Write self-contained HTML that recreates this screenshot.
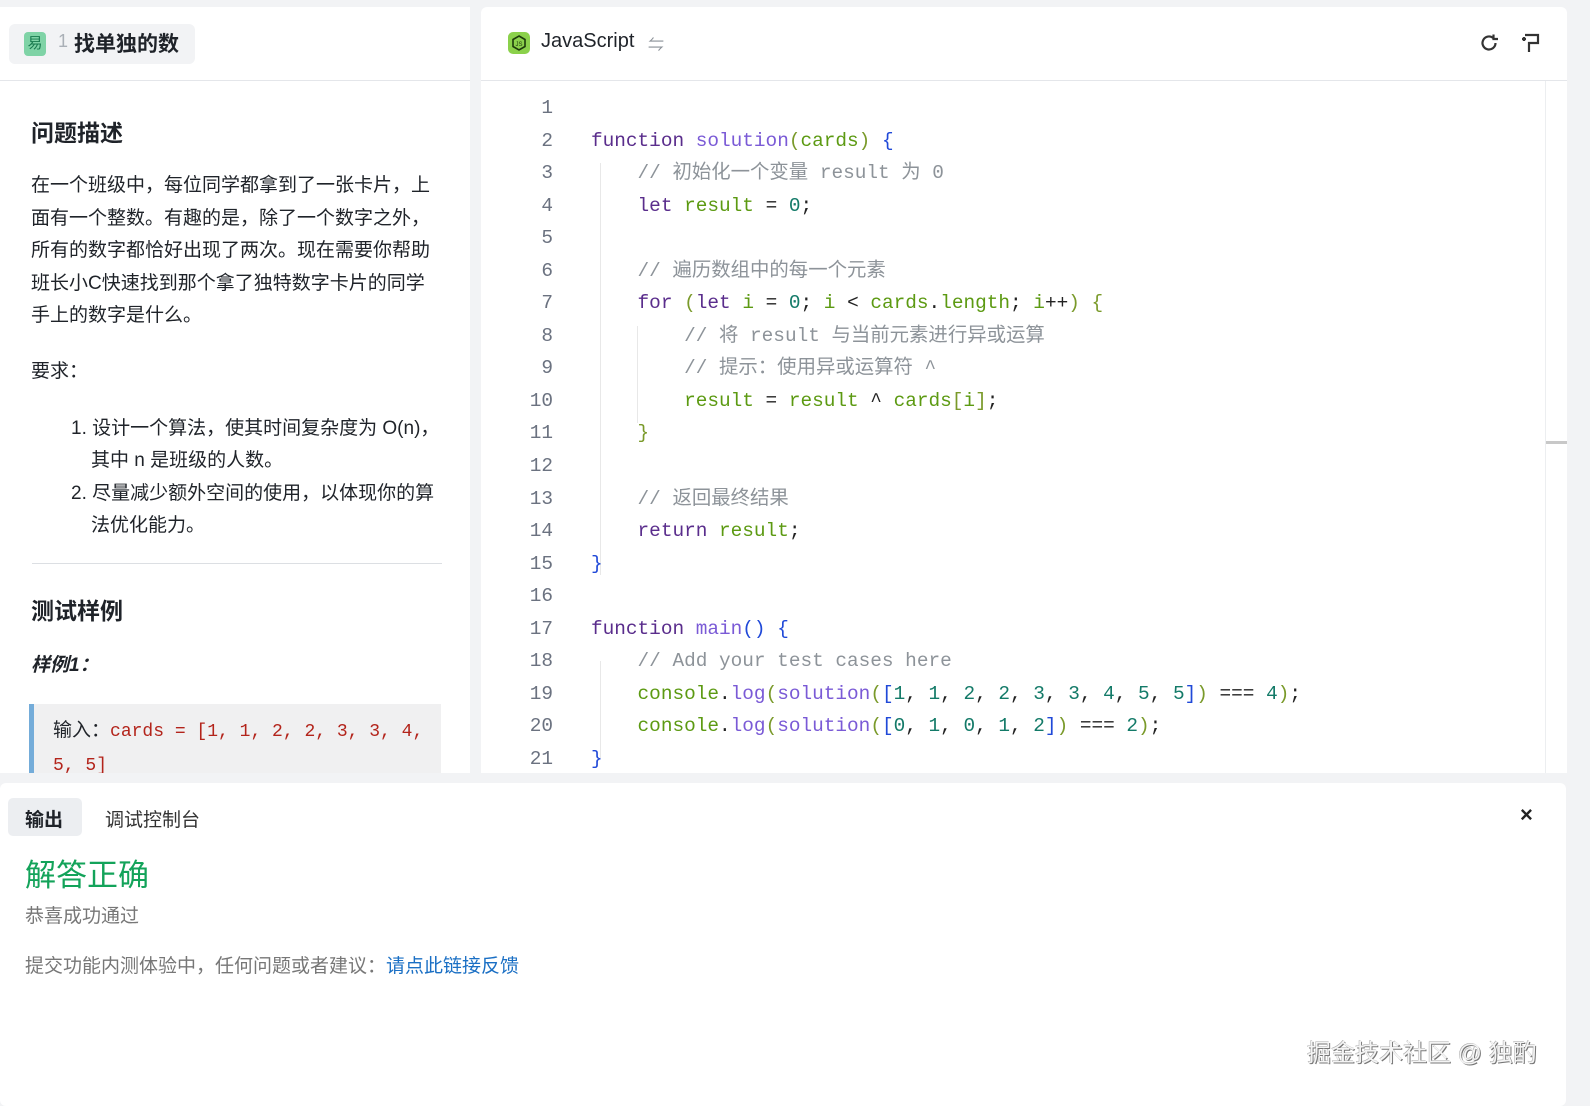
<!DOCTYPE html>
<html><head><meta charset="utf-8"><style>
*{margin:0;padding:0;box-sizing:border-box}
body{width:1590px;height:1106px;background:#f2f3f5;position:relative;overflow:hidden;font-family:"Liberation Sans","Noto Sans CJK SC",sans-serif;color:#1f2329}
.abs{position:absolute}
#left{left:0;top:7px;width:470px;height:766px;background:#fff;overflow:hidden}
#right{left:481px;top:7px;width:1086px;height:766px;background:#fff;border-radius:6px 6px 0 0;overflow:hidden}
#bottom{left:0;top:783px;width:1566px;height:323px;background:#fff;border-radius:6px}
.hdr{position:absolute;left:0;top:0;right:0;height:74px;border-bottom:1px solid #e4e6ea}
.p{font-size:19px;line-height:32.5px;color:#1f2329}
.code{font-family:"Liberation Mono","Noto Sans CJK SC",monospace;font-size:19.4px;line-height:32.55px;white-space:pre}
.k{color:#5a2d8c}.f{color:#7a5ad6}.v{color:#5c9a12}.n{color:#137a68}.c{color:#8d9399}.b{color:#2049d8}.o{color:#222}.pp{color:#7a9a2a}
</style></head><body>
<div id="left" class="abs">
 <div class="hdr">
  <div class="abs" style="left:9px;top:17px;width:186px;height:40px;background:#f2f3f5;border-radius:6px"></div>
  <div class="abs" style="left:24px;top:25px;width:22px;height:24px;background:#7fd3a6;border-radius:4px;color:#18794e;font-size:15px;text-align:center;line-height:24px">易</div>
  <div class="abs" style="left:58px;top:24px;font-size:18px;color:#aab0b7">1</div>
  <div class="abs" style="left:74px;top:21px;font-size:21px;font-weight:bold;color:#1f2329">找单独的数</div>
 </div>
 <div class="abs" style="left:31px;top:107px;font-size:23px;font-weight:bold">问题描述</div>
 <div class="abs p" style="left:31px;top:163px;width:408px">在一个班级中，每位同学都拿到了一张卡片，上面有一个整数。有趣的是，除了一个数字之外，所有的数字都恰好出现了两次。现在需要你帮助班长小C快速找到那个拿了独特数字卡片的同学手上的数字是什么。</div>
 <div class="abs p" style="left:31px;top:349px">要求：</div>
 <div class="abs p" style="left:71px;top:406px;width:380px">1. 设计一个算法，使其时间复杂度为 O(n)，</div>
 <div class="abs p" style="left:91px;top:438px">其中 n 是班级的人数。</div>
 <div class="abs p" style="left:71px;top:471px;width:380px">2. 尽量减少额外空间的使用，以体现你的算</div>
 <div class="abs p" style="left:91px;top:503px">法优化能力。</div>
 <div class="abs" style="left:32px;top:556px;width:410px;height:1px;background:#dcdfe3"></div>
 <div class="abs" style="left:31px;top:585px;font-size:23px;font-weight:bold">测试样例</div>
 <div class="abs" style="left:31px;top:643px;font-size:19px;font-weight:bold;font-style:italic">样例1：</div>
 <div class="abs" style="left:29px;top:697px;width:412px;height:80px;background:#f0f0f1;border-left:5px solid #74acd9"></div>
 <div class="abs" style="left:53px;top:708px;font-size:19px;line-height:32.5px;width:380px">输入：<span style="font-family:'Liberation Mono',monospace;color:#b3241b;font-size:18px">cards = [1, 1, 2, 2, 3, 3, 4,<br>5, 5]</span></div>
</div>
<div id="right" class="abs">
 <div class="hdr">
  <div class="abs" style="left:27px;top:25px;width:22px;height:22px;background:#8bd14b;border-radius:5px"><svg width="22" height="22" viewBox="0 0 22 22"><polygon points="11,4 17,7.5 17,14.5 11,18 5,14.5 5,7.5" fill="none" stroke="#1d3b0b" stroke-width="1.6"/><text x="11" y="14" font-size="6" text-anchor="middle" fill="#1d3b0b" font-family="Liberation Sans">JS</text></svg></div>
  <div class="abs" style="left:60px;top:23px;font-size:20px;color:#1f2329">JavaScript</div>
  <div class="abs" style="left:167px;top:24px;font-size:16px;color:#8a9097">⇋</div>
  <svg class="abs" style="left:996px;top:24px" width="24" height="24" viewBox="0 0 24 24"><path d="M18.5 12a6.5 6.5 0 1 1-2.2-4.9" fill="none" stroke="#333" stroke-width="2.2"/><path d="M16.5 3.5v4.5h4.5" fill="none" stroke="#333" stroke-width="2.2"/></svg>
  <svg class="abs" style="left:1037px;top:23px" width="26" height="26" viewBox="0 0 26 26"><path d="M7 5h13v8h-9v9M6 7v4M4 9h4" fill="none" stroke="#333" stroke-width="2.2"/></svg>
 </div>
 <div class="abs" style="left:1064px;top:74px;width:1px;height:700px;background:#eceef0"></div>
 <div class="abs" style="left:1065px;top:434px;width:21px;height:3px;background:#c8c8c8"></div>
 <div class="abs" style="left:119px;top:156px;width:1px;height:412px;background:#e8e8e8"></div>
 <div class="abs" style="left:156px;top:319px;width:1px;height:97px;background:#e8e8e8"></div>
 <div class="abs" style="left:119px;top:654px;width:1px;height:97px;background:#e8e8e8"></div>
</div>
<div class="abs code" style="left:505px;top:92px;width:48px;text-align:right;color:#6b7280">1
2
3
4
5
6
7
8
9
10
11
12
13
14
15
16
17
18
19
20
21</div>
<div class="abs code" style="left:591px;top:92px;color:#222">
<span class="k">function</span> <span class="f">solution</span><span class="pp">(</span><span class="v">cards</span><span class="pp">)</span> <span class="b">{</span>
    <span class="c">// 初始化一个变量 result 为 0</span>
    <span class="k">let</span> <span class="v">result</span> = <span class="n">0</span>;

    <span class="c">// 遍历数组中的每一个元素</span>
    <span class="k">for</span> <span class="pp">(</span><span class="k">let</span> <span class="v">i</span> = <span class="n">0</span>; <span class="v">i</span> &lt; <span class="v">cards</span>.<span class="v">length</span>; <span class="v">i</span>++<span class="pp">)</span> <span class="pp">{</span>
        <span class="c">// 将 result 与当前元素进行异或运算</span>
        <span class="c">// 提示：使用异或运算符 ^</span>
        <span class="v">result</span> = <span class="v">result</span> ^ <span class="v">cards</span><span class="pp">[</span><span class="v">i</span><span class="pp">]</span>;
    <span class="pp">}</span>

    <span class="c">// 返回最终结果</span>
    <span class="k">return</span> <span class="v">result</span>;
<span class="b">}</span>

<span class="k">function</span> <span class="f">main</span><span class="b">()</span> <span class="b">{</span>
    <span class="c">// Add your test cases here</span>
    <span class="v">console</span>.<span class="f">log</span><span class="pp">(</span><span class="f">solution</span><span class="pp">(</span><span class="b">[</span><span class="n">1</span>, <span class="n">1</span>, <span class="n">2</span>, <span class="n">2</span>, <span class="n">3</span>, <span class="n">3</span>, <span class="n">4</span>, <span class="n">5</span>, <span class="n">5</span><span class="b">]</span><span class="pp">)</span> === <span class="n">4</span><span class="pp">)</span>;
    <span class="v">console</span>.<span class="f">log</span><span class="pp">(</span><span class="f">solution</span><span class="pp">(</span><span class="b">[</span><span class="n">0</span>, <span class="n">1</span>, <span class="n">0</span>, <span class="n">1</span>, <span class="n">2</span><span class="b">]</span><span class="pp">)</span> === <span class="n">2</span><span class="pp">)</span>;
<span class="b">}</span></div>
<div id="bottom" class="abs">
 <div class="abs" style="left:8px;top:15px;width:74px;height:38px;background:#eceef1;border-radius:5px"></div>
 <div class="abs" style="left:25px;top:22px;font-size:19px;font-weight:bold">输出</div>
 <div class="abs" style="left:105px;top:22px;font-size:19px;color:#333">调试控制台</div>
 <div class="abs" style="left:1520px;top:19px;font-size:22px;font-weight:bold;color:#222">×</div>
 <div class="abs" style="left:25px;top:67px;font-size:31px;color:#13a35a">解答正确</div>
 <div class="abs" style="left:25px;top:118px;font-size:19px;color:#777">恭喜成功通过</div>
 <div class="abs" style="left:25px;top:168px;font-size:19px;color:#777">提交功能内测体验中，任何问题或者建议：<span style="color:#1a6fc4">请点此链接反馈</span></div>
 <div class="abs" style="left:1307px;top:250px;font-size:24px;font-weight:normal;color:#f4f4f4;text-shadow:1px 1px 0 #777,-0.5px -0.5px 0 #aaa">掘金技术社区 @ 独酌</div>
</div>
</body></html>
